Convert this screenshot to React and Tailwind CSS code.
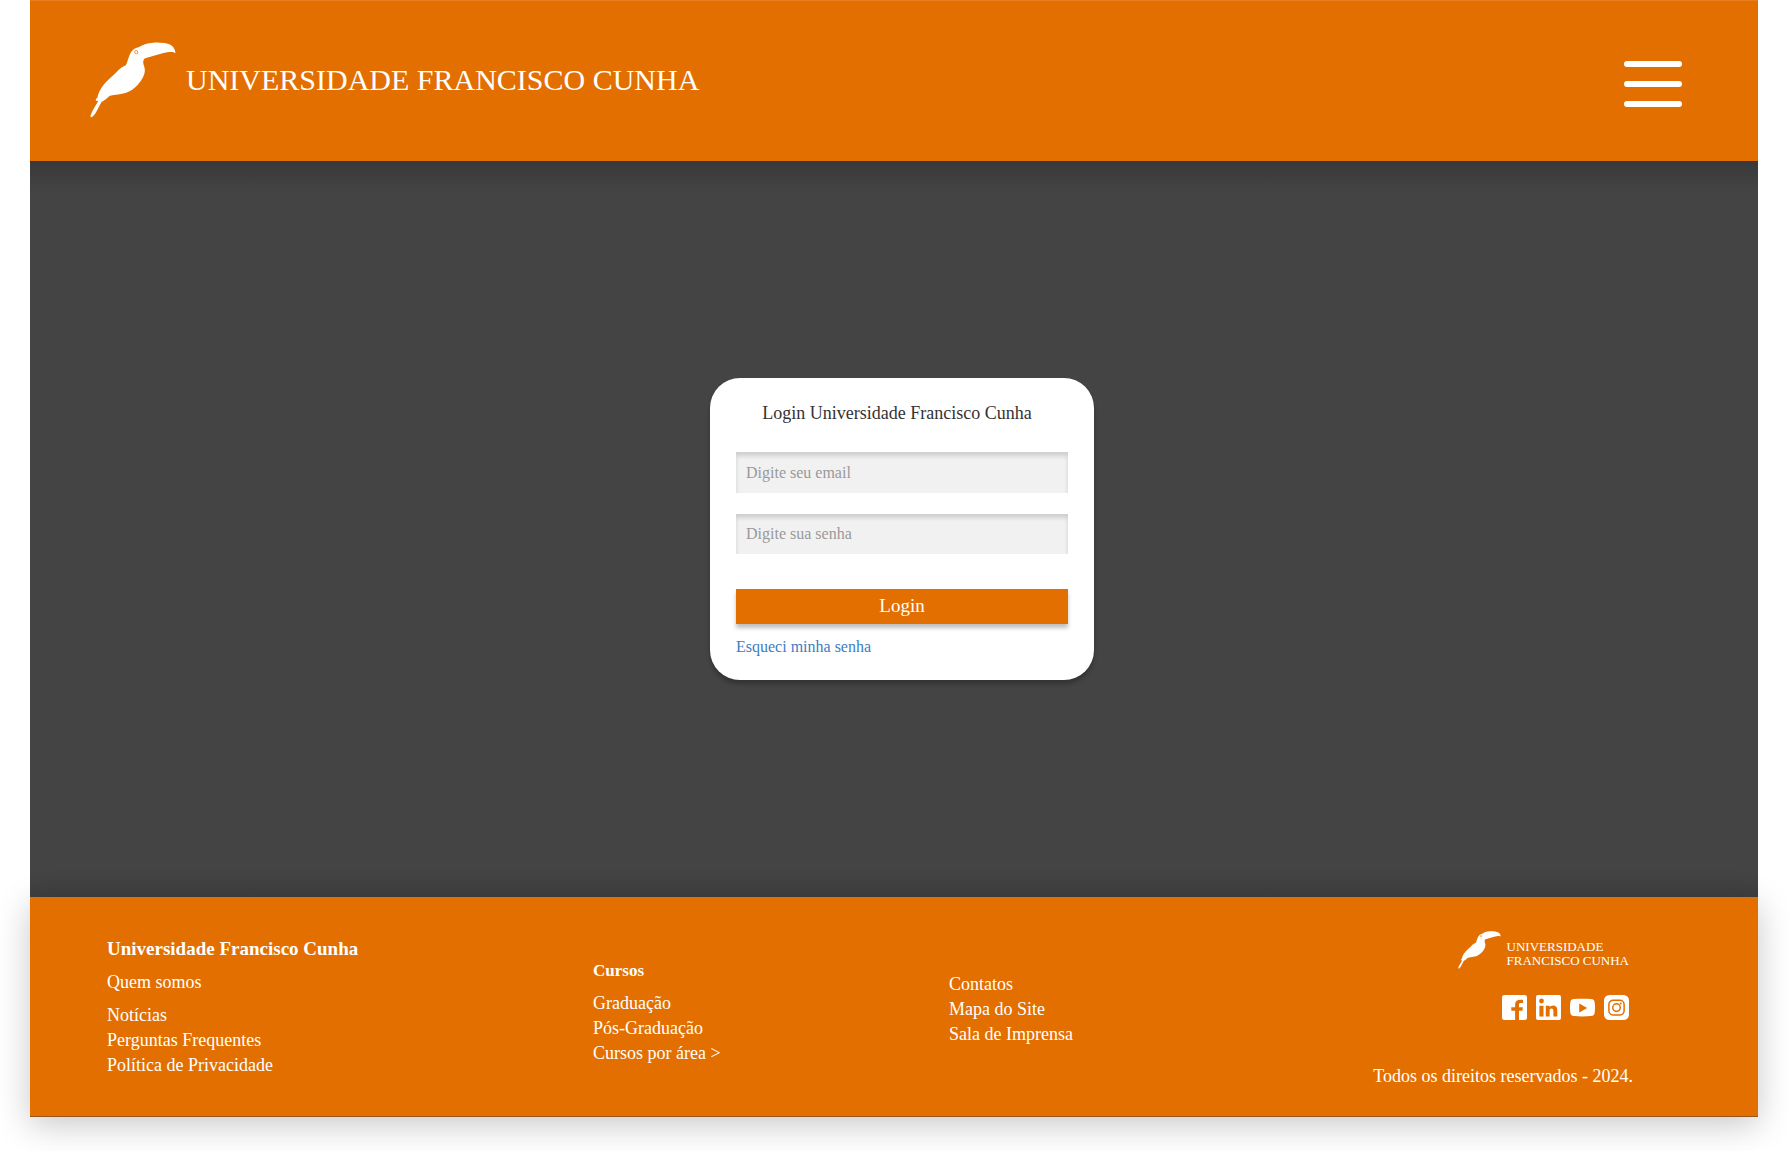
function Toucan({ className }) {
  return (
    <svg viewBox="32 35 257 228" className={className} fill="currentColor" aria-hidden="true">
      <path
        fillRule="evenodd"
        d="M288 68 C287 60 284 50 274 44 C262 38 240 36 222 37 C203 38 188 44 177 51 C166 53 158 60 153 68 C147 79 145 93 139 105 C131 109 124 112 117 119 C108 130 98 137 88 147 C75 159 66 171 60 183 C56 191 55 198 53 204 C49 205 47 208 50 211 L56 212 C50 224 38 241 34 253 C32 258 33 262 37 260 C42 258 46 252 50 245 L66 215 C75 210 83 203 91 196 C108 193 124 191 140 187 C154 182 165 173 175 163 C186 151 195 136 196 122 C197 112 191 104 191 95 C192 90 193 86 197 84 C214 79 232 74 249 69 C262 65 273 64 280 65 C284 66 287 69 288 68 Z M170 60 C166 60 165 63 165 66 C165 70 167 72 170 72 C174 72 176 70 176 66 C176 63 174 60 170 60 Z M170 62 C173 62 174 64 174 66 C174 69 173 70 170 70 C168 70 167 69 167 66 C167 64 168 62 170 62 Z"
      />
    </svg>
  );
}

function Facebook() {
  return (
    <svg viewBox="0 0 25 25" className="size-[25px]" fill="currentColor" aria-hidden="true">
      <path d="M2.5 0 H22.5 A2.5 2.5 0 0 1 25 2.5 V22.5 A2.5 2.5 0 0 1 22.5 25 H17 V15.8 H20.4 L20.9 12.2 H17 V9.8 C17 8.6 17.5 8.1 18.8 8.1 H21 V4.9 C20.3 4.8 19.3 4.7 18.3 4.7 C15 4.7 13.1 6.5 13.1 9.6 V12.2 H9.3 V15.8 H13.1 V25 H2.5 A2.5 2.5 0 0 1 0 22.5 V2.5 A2.5 2.5 0 0 1 2.5 0 Z" />
    </svg>
  );
}

function Linkedin() {
  return (
    <svg viewBox="0 0 25 25" className="size-[25px]" fill="currentColor" aria-hidden="true">
      <path
        fillRule="evenodd"
        d="M2 0 H23 A2 2 0 0 1 25 2 V23 A2 2 0 0 1 23 25 H2 A2 2 0 0 1 0 23 V2 A2 2 0 0 1 2 0 Z M5.5 3.6 A2.4 2.4 0 1 0 5.5 8.4 A2.4 2.4 0 1 0 5.5 3.6 Z M3.4 10.7 V21.5 H7.5 V10.7 Z M9.8 10.7 V21.5 H13.6 V15.7 C13.6 14.3 14.3 13.5 15.6 13.5 C16.9 13.5 17.4 14.4 17.4 15.9 V21.5 H21.3 V15 C21.3 12 19.8 10.4 17.2 10.4 C15.5 10.4 14.3 11.1 13.6 12.2 V10.7 Z"
      />
    </svg>
  );
}

function Youtube() {
  return (
    <svg viewBox="0 0 25 25" className="size-[25px]" fill="currentColor" aria-hidden="true">
      <path
        fillRule="evenodd"
        d="M4 4.1 C9 3.6 16 3.6 21 4.1 C23.5 4.3 24.5 5.5 24.7 7.5 C25.1 11 25.1 14.5 24.7 17.6 C24.5 19.7 23.5 20.9 21 21.1 C16 21.6 9 21.6 4 21.1 C1.5 20.9 .5 19.7 .3 17.6 C-.1 14.5 -.1 11 .3 7.5 C.5 5.5 1.5 4.3 4 4.1 Z M9.2 8.4 V17.5 L17.2 13 Z"
      />
    </svg>
  );
}

function Instagram() {
  return (
    <svg viewBox="0 0 25 25" className="size-[25px]" aria-hidden="true">
      <rect width="25" height="25" rx="5.5" fill="currentColor" />
      <g fill="none" stroke="#e36f00" strokeWidth="1.5">
        <rect x="4.9" y="5.2" width="15.2" height="14.8" rx="4.2" />
        <circle cx="12.5" cy="12.6" r="3.8" />
      </g>
      <circle cx="16.7" cy="8.5" r="1" fill="#e36f00" />
    </svg>
  );
}

const socials = [
  ["Facebook", Facebook],
  ["LinkedIn", Linkedin],
  ["YouTube", Youtube],
  ["Instagram", Instagram],
];

function Links({ items }) {
  return (
    <ul>
      {items.map((item) => (
        <li key={item}>
          <a href="#">{item}</a>
        </li>
      ))}
    </ul>
  );
}

export default function App() {
  return (
    <div className="flex min-h-screen flex-col bg-white px-[30px] pb-[34px] font-['Liberation_Serif',serif]">
      <header className="flex items-center justify-between border-t border-[#e67e1f] bg-[#e36f00] pt-[41px] pb-[43px] pr-[76px] pl-[60px] text-white">
        <a href="#" className="flex items-center gap-[10px]">
          <Toucan className="h-[76px] w-[86px]" />
          <span className="text-[30px] leading-10">UNIVERSIDADE FRANCISCO CUNHA</span>
        </a>
        <button type="button" aria-label="Menu" className="mt-2 flex w-[58px] flex-col gap-[14px]">
          <span className="h-[6px] rounded-full bg-white" />
          <span className="h-[6px] rounded-full bg-white" />
          <span className="h-[6px] rounded-full bg-white" />
        </button>
      </header>

      <main className="flex flex-1 items-center justify-center bg-[#444444] bg-[linear-gradient(to_bottom,rgba(0,0,0,0.17),transparent_32px,transparent_calc(100%-24px),rgba(0,0,0,0.08))] pl-4">
        <form className="flex w-[384px] flex-col rounded-[30px] bg-white px-[26px] pt-[23px] pb-[21px] shadow-[0_4px_4px_rgba(0,0,0,0.25)]">
          <h1 className="pr-[10px] text-center text-[18px] leading-6 text-[#333333]">
            Login Universidade Francisco Cunha
          </h1>
          <input
            type="email"
            aria-label="Digite seu email"
            placeholder="Digite seu email"
            className="mt-[27px] h-[41px] w-full bg-[#f1f1f1] px-[10px] text-[16px] text-[#333333] shadow-[inset_0_4px_4px_rgba(0,0,0,0.14)] outline-none placeholder:text-[#999999]"
          />
          <input
            type="password"
            aria-label="Digite sua senha"
            placeholder="Digite sua senha"
            className="mt-[21px] h-[40px] w-full bg-[#f1f1f1] px-[10px] text-[16px] text-[#333333] shadow-[inset_0_4px_4px_rgba(0,0,0,0.14)] outline-none placeholder:text-[#999999]"
          />
          <button
            type="submit"
            className="mt-[35px] h-[35px] w-full bg-[#e36f00] text-[19px] text-white shadow-[0_4px_4px_rgba(0,0,0,0.25)]"
          >
            Login
          </button>
          <a href="#" className="mt-[11px] self-start text-[16px] leading-6 text-[#3e7cc2]">
            Esqueci minha senha
          </a>
        </form>
      </main>

      <footer className="flex justify-between border-b border-[#98571a] bg-[#e36f00] pr-[125px] pb-[27px] pl-[77px] text-[18px] leading-[25px] text-white shadow-[0_8px_32px_rgba(0,0,0,0.22)]">
        <nav aria-label="Universidade" className="w-[486px] pt-[39px]">
          <h2 className="text-[19px] font-bold">Universidade Francisco Cunha</h2>
          <a href="#" className="mt-[9px] mb-2 block">Quem somos</a>
          <Links items={["Notícias", "Perguntas Frequentes", "Política de Privacidade"]} />
        </nav>
        <nav aria-label="Cursos" className="w-[356px] pt-[61px]">
          <h2 className="mb-2 text-[17px] font-bold">Cursos</h2>
          <Links items={["Graduação", "Pós-Graduação", "Cursos por área >"]} />
        </nav>
        <nav aria-label="Contatos" className="pt-[75px]">
          <Links items={["Contatos", "Mapa do Site", "Sala de Imprensa"]} />
        </nav>
        <div className="ml-auto flex flex-col items-end pt-[34px]">
          <a href="#" className="flex items-center gap-[6px] pr-1">
            <Toucan className="h-[38px] w-[43px]" />
            <span className="pt-[7px] text-[13px] leading-[14px]">
              UNIVERSIDADE
              <br />
              FRANCISCO CUNHA
            </span>
          </a>
          <div className="mt-[26px] flex gap-[9px] pr-1">
            {socials.map(([name, Icon]) => (
              <a key={name} href="#" aria-label={name}>
                <Icon />
              </a>
            ))}
          </div>
          <p className="mt-11">Todos os direitos reservados - 2024.</p>
        </div>
      </footer>
    </div>
  );
}
